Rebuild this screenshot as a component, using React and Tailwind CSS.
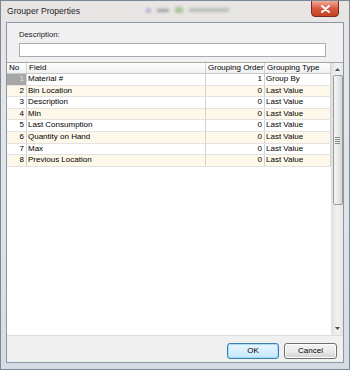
const rows = [
  [1, 'Material #', 1, 'Group By'],
  [2, 'Bin Location', 0, 'Last Value'],
  [3, 'Description', 0, 'Last Value'],
  [4, 'Min', 0, 'Last Value'],
  [5, 'Last Consumption', 0, 'Last Value'],
  [6, 'Quantity on Hand', 0, 'Last Value'],
  [7, 'Max', 0, 'Last Value'],
  [8, 'Previous Location', 0, 'Last Value'],
]

function ScrollBar() {
  return (
    <div className="w-[12px] flex flex-col bg-gradient-to-r from-[#e3e3e3] via-[#f2f2f2] to-[#e6e6e6] border-l border-[#e0e0e0]">
      <div className="h-[12px] flex items-center justify-center">
        <svg width="5" height="3" viewBox="0 0 5 3"><path d="M0 3 L2.5 0 L5 3 Z" fill="#4d4d4d" /></svg>
      </div>
      <div className="h-[130px] ml-[0.5px] mr-[0.5px] rounded-[2px] border border-[#9a9a9a] bg-gradient-to-r from-[#f4f4f4] via-[#e9e9e9] to-[#d6d6d6] flex items-center justify-center">
        <div className="flex flex-col gap-[1px]">
          <div className="w-[5px] h-[1px] bg-[#8a8a8a]" />
          <div className="w-[5px] h-[1px] bg-[#8a8a8a]" />
          <div className="w-[5px] h-[1px] bg-[#8a8a8a]" />
          <div className="w-[5px] h-[1px] bg-[#8a8a8a]" />
        </div>
      </div>
      <div className="flex-1" />
      <div className="h-[13px] flex items-center justify-center">
        <svg width="5" height="3" viewBox="0 0 5 3"><path d="M0 0 L2.5 3 L5 0 Z" fill="#4d4d4d" /></svg>
      </div>
    </div>
  )
}

function Grid() {
  return (
    <div className="mt-[5px] h-[273px] flex bg-white border-t border-[#a7a7a7]">
      <div className="flex-1 flex flex-col">
        <div className="h-[10px] flex bg-gradient-to-b from-[#ffffff] to-[#eef0f2] border-b border-[#c9c9c9] leading-[10px] box-content">
          <div className="w-[20px] pl-[2px] border-r border-[#d2d2d2]">No</div>
          <div className="w-[179px] pl-[2px] border-r border-[#d2d2d2]">Field</div>
          <div className="w-[59px] pl-[2px] border-r border-[#d2d2d2]">Grouping Order</div>
          <div className="w-[66px] pl-[2px] border-r border-[#d2d2d2]">Grouping Type</div>
        </div>
        {rows.map(([no, field, order, type]) => (
          <div
            key={no}
            className={`h-[11.6px] flex border-b border-[#e2e2e2] leading-[10.6px] ${no % 2 === 0 ? 'bg-[#fdf8ea]' : 'bg-white'}`}
          >
            <div className={`w-[20px] pr-[2px] text-right border-r border-[#d2d2d2] ${no === 1 ? 'bg-[#a6a6a6] text-[#e6e6e6]' : ''}`}>{no}</div>
            <div className="w-[179px] pl-[1px] border-r border-[#d2d2d2]">{field}</div>
            <div className="w-[59px] pr-[2px] text-right border-r border-[#d2d2d2]">{order}</div>
            <div className="w-[66px] pl-[1px] border-r border-[#d2d2d2]">{type}</div>
          </div>
        ))}
      </div>
      <ScrollBar />
    </div>
  )
}

export default function App() {
  return (
    <div
      className="w-[350px] h-[370px] flex flex-col bg-gradient-to-b from-[#e8e5e4] via-[#dfe5eb] to-[#d5dce4] border border-[#7b8896] overflow-hidden"
      style={{ fontFamily: '"Liberation Sans", Arial, sans-serif' }}
    >
      <div className="h-[21px] flex items-start">
        <div className="pl-[6px] pt-[5px] text-[8.6px] text-[#1e1e1e] leading-[11px]">Grouper Properties</div>
        {/* blurred things behind the glass */}
        <div className="ml-[66px] mt-[6px] flex items-center gap-[6px] blur-[1.5px] opacity-50">
          <div className="w-[5px] h-[5px] rounded-full bg-[#8a6cc8]" />
          <div className="w-[12px] h-[3px] bg-[#555]" />
          <div className="w-[8px] h-[6px] bg-[#6aa84f]" />
          <div className="w-[40px] h-[4px] bg-[#8a9a8a]" />
        </div>
        <div className="ml-auto mr-[10px] w-[28px] h-[17px] -mt-[1px] rounded-b-[4px] border border-[#7a2a20] bg-gradient-to-b from-[#eeaa9a] via-[#d85a40] to-[#c4421f] flex items-center justify-center">
          <svg width="9" height="8" viewBox="0 0 9 8">
            <path d="M1 1 L8 7 M8 1 L1 7" stroke="#ffffff" strokeWidth="2" strokeLinecap="round" />
          </svg>
        </div>
      </div>
      <div className="flex-1 flex px-[5px]">
        <div className="flex-1 flex flex-col bg-[#f0f0f0] border border-[#8b97a4] text-[8px] text-black">
          <div className="pt-[7px] pl-[12px] leading-[10px] text-[7.7px] text-[#1b1b1b]">Description:</div>
          <div className="mt-[3px] ml-[12px] w-[307px] h-[14px] bg-white border border-[#a5acb5]" />
          <Grid />
          <div className="flex-1 flex items-start justify-end pt-[7px] pr-[6px] gap-[5px] border-t border-[#dcdcdc]">
            <button className="w-[52px] h-[16px] rounded-[3px] border border-[#3c7fb1] bg-gradient-to-b from-[#eaf6fd] via-[#d9f0fc] to-[#bee6fd] text-[8px] leading-[14px] text-black shadow-[inset_0_0_0_1px_#a8dcf5]">
              OK
            </button>
            <button className="w-[53px] h-[16px] rounded-[3px] border border-[#707070] bg-gradient-to-b from-[#f2f2f2] via-[#ebebeb] to-[#cfcfcf] text-[8px] leading-[14px] text-black shadow-[inset_0_0_0_1px_#fcfcfc]">
              Cancel
            </button>
          </div>
        </div>
      </div>
      <div className="h-[6px]" />
    </div>
  )
}
